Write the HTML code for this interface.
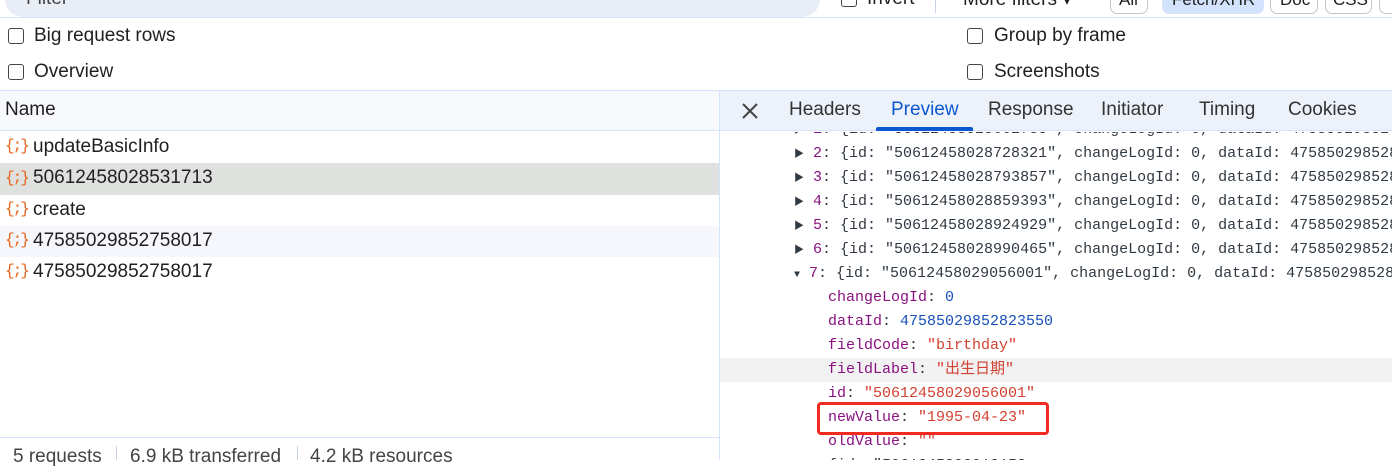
<!DOCTYPE html>
<html><head><meta charset="utf-8"><style>
*{margin:0;padding:0;box-sizing:border-box}
body{width:1392px;height:460px;overflow:hidden;background:#fff;font-family:"Liberation Sans","Noto Sans CJK SC",sans-serif;color:#1f1f1f;position:relative;font-size:19px}
.a{position:absolute;white-space:nowrap}
.cb{position:absolute;width:16px;height:16px;border:1.5px solid #444;border-radius:3px;background:#fff}
.mono{font-family:"Liberation Mono","Noto Sans CJK SC",monospace;font-size:15px;line-height:20px;height:20px;position:absolute;white-space:nowrap;color:#303942}
.k{color:#881280}.s{color:#d2402f}.n{color:#1750b8}
.ic{position:absolute;font-family:"Liberation Mono",monospace;font-size:16px;color:#e8641b;letter-spacing:-2px}
</style></head><body>
<!-- top filter bar -->
<div class="a" style="left:5px;top:-20px;width:815px;height:37px;background:#e9eef6;border-radius:18px"></div>
<div class="a" style="left:0;top:17px;width:1392px;height:1px;background:#d3e3fd"></div>
<div class="a" style="left:26px;top:-12px;color:#444">Filter</div>
<div class="cb" style="left:841px;top:-9px"></div>
<div class="a" style="left:867px;top:-12px">Invert</div>
<div class="a" style="left:935px;top:0;width:1px;height:13px;background:#c7d2e8"></div>
<div class="a" style="left:963px;top:-12px">More filters ▾</div>
<div class="a" style="left:1110px;top:-10px;width:38px;height:24px;border:1px solid #c4c7c5;border-radius:7px"></div>
<div class="a" style="left:1119px;top:-10px;font-size:17px">All</div>
<div class="a" style="left:1162px;top:-10px;width:102px;height:24px;background:#d3e3fd;border-radius:7px"></div>
<div class="a" style="left:1172px;top:-10px;font-size:17px">Fetch/XHR</div>
<div class="a" style="left:1270px;top:-10px;width:48px;height:24px;border:1px solid #c4c7c5;border-radius:7px"></div>
<div class="a" style="left:1280px;top:-10px;font-size:17px">Doc</div>
<div class="a" style="left:1325px;top:-10px;width:47px;height:24px;border:1px solid #c4c7c5;border-radius:7px"></div>
<div class="a" style="left:1333px;top:-10px;font-size:17px">CSS</div>
<div class="a" style="left:1379px;top:-10px;width:30px;height:24px;border:1px solid #c4c7c5;border-radius:7px"></div>
<!-- settings -->
<div class="cb" style="left:8px;top:28px"></div><div class="a" style="left:34px;top:25px">Big request rows</div>
<div class="cb" style="left:8px;top:64px"></div><div class="a" style="left:34px;top:61px">Overview</div>
<div class="cb" style="left:967px;top:28px"></div><div class="a" style="left:994px;top:25px">Group by frame</div>
<div class="cb" style="left:967px;top:64px"></div><div class="a" style="left:994px;top:61px">Screenshots</div>
<div class="a" style="left:0;top:90px;width:1392px;height:1px;background:#d3e3fd"></div>
<!-- left list -->
<div class="a" style="left:0;top:91px;width:719px;height:40px;background:#f8f9fd;border-bottom:1px solid #d3e3fd"></div>
<div class="a" style="left:5px;top:99px">Name</div>
<div class="a" style="left:0;top:163px;width:719px;height:32px;background:#dfe1df"></div>
<div class="a" style="left:0;top:226px;width:719px;height:31px;background:#f5f7fc"></div>
<div class="ic" style="left:5px;top:137px">{;}</div><div class="a" style="left:33px;top:136px">updateBasicInfo</div>
<div class="ic" style="left:5px;top:169px">{;}</div><div class="a" style="left:33px;top:167px">50612458028531713</div>
<div class="ic" style="left:5px;top:200px">{;}</div><div class="a" style="left:33px;top:199px">create</div>
<div class="ic" style="left:5px;top:231px">{;}</div><div class="a" style="left:33px;top:230px">47585029852758017</div>
<div class="ic" style="left:5px;top:262px">{;}</div><div class="a" style="left:33px;top:261px">47585029852758017</div>
<div class="a" style="left:0;top:437px;width:719px;height:1px;background:#d3e3fd"></div>
<div class="a" style="left:13px;top:446px;color:#444">5 requests</div>
<div class="a" style="left:116px;top:446px;width:1px;height:14px;background:#c7d2e8"></div>
<div class="a" style="left:130px;top:446px;color:#444">6.9 kB transferred</div>
<div class="a" style="left:297px;top:446px;width:1px;height:14px;background:#c7d2e8"></div>
<div class="a" style="left:310px;top:446px;color:#444">4.2 kB resources</div>
<div class="a" style="left:719px;top:91px;width:1px;height:369px;background:#d3e3fd"></div>
<!-- right tabs -->
<div class="a" style="left:720px;top:91px;width:672px;height:40px;background:#edf1f9;border-bottom:1px solid #d3e3fd"></div>
<svg class="a" style="left:741px;top:102px" width="18" height="18"><path d="M2 2L16 16M16 2L2 16" stroke="#444" stroke-width="2"/></svg>
<div class="a" style="left:789px;top:99px;color:#333">Headers</div>
<div class="a" style="left:891px;top:99px;color:#0b57d0">Preview</div>
<div class="a" style="left:876px;top:127px;width:97px;height:4px;background:#0b57d0;border-radius:2px 2px 0 0"></div>
<div class="a" style="left:988px;top:99px;color:#333">Response</div>
<div class="a" style="left:1101px;top:99px;color:#333">Initiator</div>
<div class="a" style="left:1199px;top:99px;color:#333">Timing</div>
<div class="a" style="left:1288px;top:99px;color:#333">Cookies</div>
<!-- preview -->
<div class="a" style="left:720px;top:132px;width:672px;height:328px;overflow:hidden">
<div class="a" style="left:0;top:226px;width:672px;height:24px;background:#f1f1f1"></div>
<div class="mono" style="left:74px;top:-12px"><span style="font-size:10px">▶</span> <span class="k">1</span>: {id: "50612458028662785", changeLogId: 0, dataId: 47585029852</div>
<div class="mono" style="left:74px;top:12px"><span style="font-size:10px">▶</span> <span class="k">2</span>: {id: "50612458028728321", changeLogId: 0, dataId: 475850298528</div>
<div class="mono" style="left:74px;top:36px"><span style="font-size:10px">▶</span> <span class="k">3</span>: {id: "50612458028793857", changeLogId: 0, dataId: 475850298528</div>
<div class="mono" style="left:74px;top:60px"><span style="font-size:10px">▶</span> <span class="k">4</span>: {id: "50612458028859393", changeLogId: 0, dataId: 475850298528</div>
<div class="mono" style="left:74px;top:84px"><span style="font-size:10px">▶</span> <span class="k">5</span>: {id: "50612458028924929", changeLogId: 0, dataId: 475850298528</div>
<div class="mono" style="left:74px;top:108px"><span style="font-size:10px">▶</span> <span class="k">6</span>: {id: "50612458028990465", changeLogId: 0, dataId: 475850298528</div>
<div class="mono" style="left:74px;top:132px"><span style="font-size:10px">▼</span> <span class="k">7</span>: {id: "50612458029056001", changeLogId: 0, dataId: 475850298528</div>
<div class="mono" style="left:108px;top:156px"><span class="k">changeLogId</span>: <span class="n">0</span></div>
<div class="mono" style="left:108px;top:180px"><span class="k">dataId</span>: <span class="n">47585029852823550</span></div>
<div class="mono" style="left:108px;top:204px"><span class="k">fieldCode</span>: <span class="s">"birthday"</span></div>
<div class="mono" style="left:108px;top:228px"><span class="k">fieldLabel</span>: <span class="s">"出生日期"</span></div>
<div class="mono" style="left:108px;top:252px"><span class="k">id</span>: <span class="s">"50612458029056001"</span></div>
<div class="mono" style="left:108px;top:276px"><span class="k">newValue</span>: <span class="s">"1995-04-23"</span></div>
<div class="mono" style="left:108px;top:300px"><span class="k">oldValue</span>: <span class="s">""</span></div>
<div class="mono" style="left:108px;top:324px">{id: "5061245802912153</div>
<div class="a" style="left:97px;top:270px;width:232px;height:33px;border:3.5px solid #f22a1f;border-radius:4px"></div>
</div>
</body></html>
